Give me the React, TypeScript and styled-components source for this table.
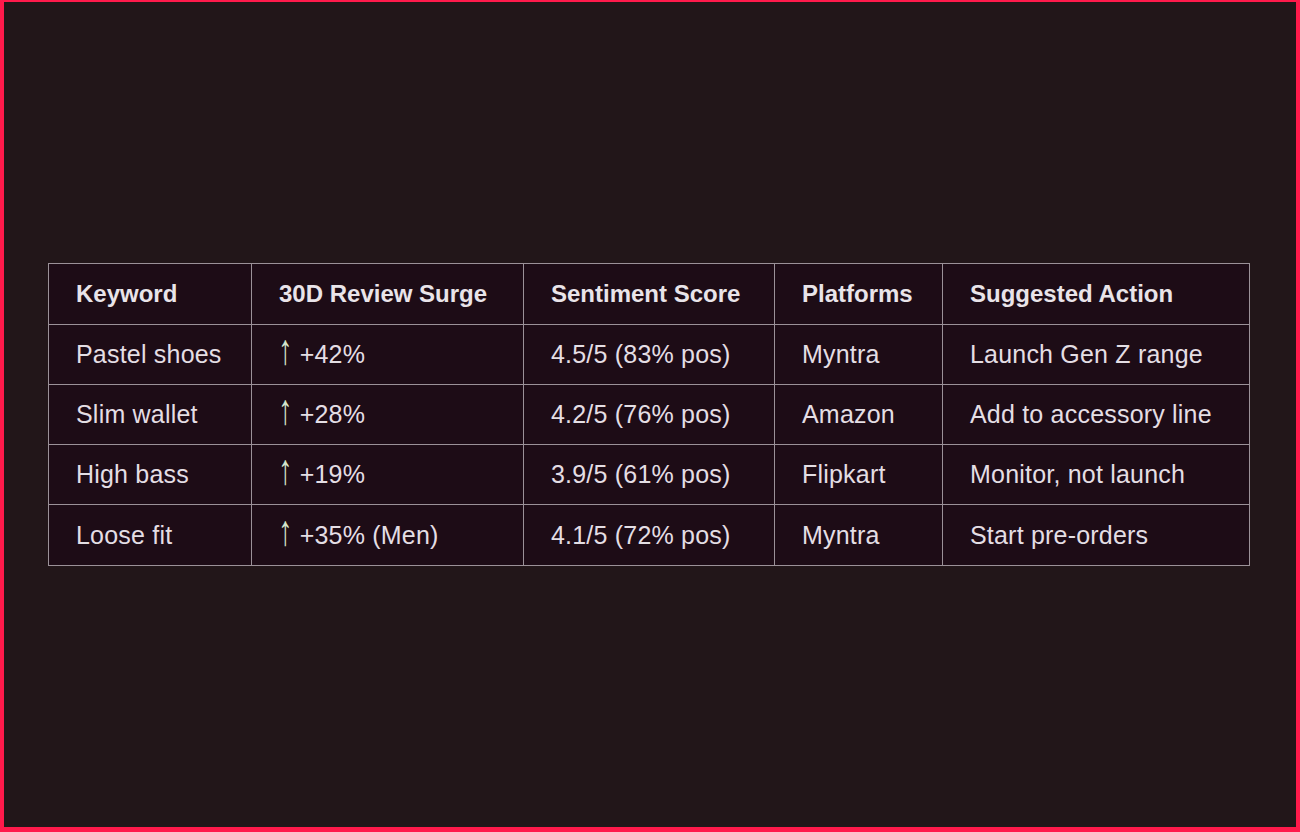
import React from "react";
import styled, { createGlobalStyle } from "styled-components";

const Global = createGlobalStyle`
  html, body { margin: 0; padding: 0; background: #221619; }
  * { box-sizing: border-box; }
`;

const Frame = styled.div`
  width: 1300px;
  height: 832px;
  border-style: solid;
  border-color: #ff1a4b;
  border-width: 2px 4px 5px 4px;
  background: #221619;
  display: flex;
  align-items: center;
  padding: 0 46px 0 44px;
`;

const Table = styled.table`
  width: 1201px;
  border-collapse: collapse;
  table-layout: fixed;
  background: #1d0c16;
  font-family: "Liberation Sans", Arial, sans-serif;
  color: #e4dee4;
`;

const HeadCell = styled.th`
  border: 1px solid #9b9198;
  height: 61px;
  padding: 0 27px;
  text-align: left;
  font-weight: 700;
  font-size: 24px;
  letter-spacing: 0px;
  color: #e9e4e9;
`;

const Cell = styled.td<{ $last?: boolean }>`
  border: 1px solid #9b9198;
  height: ${(p) => (p.$last ? 61 : 60)}px;
  padding: 0 27px;
  font-size: 25px;
  font-weight: 400;
  letter-spacing: 0.2px;
  white-space: nowrap;
`;

const Arrow = styled.span`
  display: inline-block;
  color: #d4e4cb;
  margin-right: 8px;
  transform: scale(1.15, 1.7);
  transform-origin: 50% 72%;
`;

const widths = [203, 272, 251, 168, 307];
const headers = ["Keyword", "30D Review Surge", "Sentiment Score", "Platforms", "Suggested Action"];
const rows = [
  ["Pastel shoes", "+42%", "4.5/5 (83% pos)", "Myntra", "Launch Gen Z range"],
  ["Slim wallet", "+28%", "4.2/5 (76% pos)", "Amazon", "Add to accessory line"],
  ["High bass", "+19%", "3.9/5 (61% pos)", "Flipkart", "Monitor, not launch"],
  ["Loose fit", "+35% (Men)", "4.1/5 (72% pos)", "Myntra", "Start pre-orders"],
];

export default function App() {
  return (
    <>
      <Global />
      <Frame>
        <Table>
          <colgroup>
            {widths.map((w, i) => (
              <col key={i} style={{ width: w }} />
            ))}
          </colgroup>
          <thead>
            <tr>
              {headers.map((h) => (
                <HeadCell key={h}>{h}</HeadCell>
              ))}
            </tr>
          </thead>
          <tbody>
            {rows.map((r, i) => {
              const last = i === rows.length - 1;
              return (
                <tr key={r[0]}>
                  <Cell $last={last}>{r[0]}</Cell>
                  <Cell $last={last}>
                    <Arrow>↑</Arrow>
                    {r[1]}
                  </Cell>
                  <Cell $last={last}>{r[2]}</Cell>
                  <Cell $last={last}>{r[3]}</Cell>
                  <Cell $last={last}>{r[4]}</Cell>
                </tr>
              );
            })}
          </tbody>
        </Table>
      </Frame>
    </>
  );
}
